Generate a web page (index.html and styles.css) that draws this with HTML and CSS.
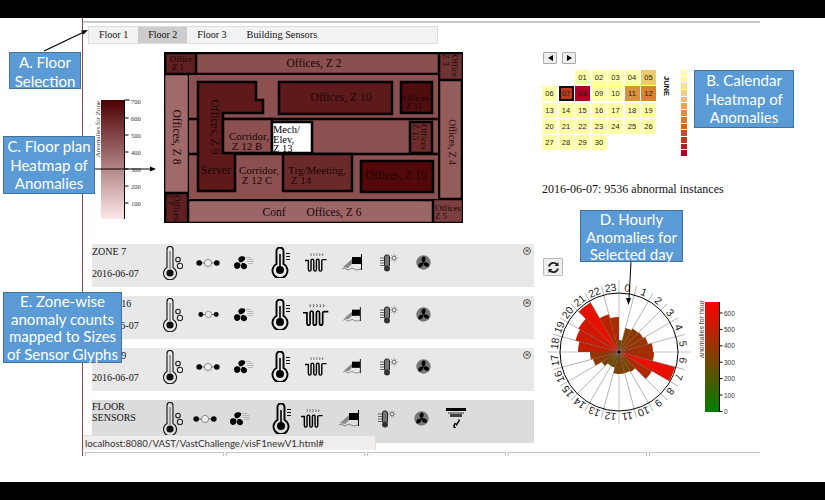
FILE: index.html
```html
<!DOCTYPE html>
<html lang="en">
<head>
<meta charset="UTF-8">
<title>VAST Challenge Floor Anomalies</title>
<link rel="stylesheet" href="styles.css">
</head>
<body>

<svg class="defs" width="0" height="0">
  <symbol id="g-therm-drops" viewBox="0 0 20 34">
    <path d="M4 3.500a3 3 0 0 1 6 0v18a6.500 6.500 0 1 1-6 0z" fill="none" stroke="#111" stroke-width="1.100"/>
    <path d="M7 5v18" stroke="#999" stroke-width="1.800"/>
    <circle cx="7" cy="27" r="3.600" fill="#111"/>
    <circle cx="15" cy="13.500" r="2.300" fill="none" stroke="#222" stroke-width="1.100"/>
    <circle cx="17" cy="20" r="2.700" fill="none" stroke="#222" stroke-width="1.100"/>
  </symbol>
  <symbol id="g-dots" viewBox="0 0 24 10">
    <path d="M3 5h18" stroke="#666" stroke-width="1"/>
    <circle cx="3.200" cy="5" r="2.800" fill="#000"/>
    <circle cx="12" cy="5" r="3.600" fill="#eee" stroke="#888"/>
    <circle cx="20.800" cy="5" r="2.800" fill="#000"/>
  </symbol>
  <symbol id="g-fan-lines" viewBox="0 0 20 14">
    <path d="M6 6.500C3 4 4 .5 8 .2c3-.5 4 1.800 2.500 3.800C9.500 5.500 8 6.500 6 6.500zM6 7.500C3 5.200 0 6.500 0 9.500c0 3 3 4.500 5 2.800C6.500 11 7 9.500 6 7.500zM8 7c3-.5 5 1 5 3.500 0 2.500-3 3.500-5 2C6.500 11.500 6.500 9 8 7z" fill="#000"/>
    <path d="M12 1.500h5M13 3.500h6M13 5.500h7M14 7.500h5" stroke="#aaa" stroke-width=".8"/>
  </symbol>
  <symbol id="g-therm-bars" viewBox="0 0 20 31">
    <path d="M5.500 4a3.500 3.500 0 0 1 7 0v13a7.500 7.500 0 1 1-7 0z" fill="none" stroke="#000" stroke-width="1.900"/>
    <path d="M9 7v16" stroke="#000" stroke-width="1.600"/>
    <circle cx="9" cy="23" r="4" fill="#000"/>
    <path d="M15 6.500h4M15 9.500h4M15 12.500h4" stroke="#111" stroke-width="1.200"/>
  </symbol>
  <symbol id="g-heater" viewBox="0 0 24 21">
    <path d="M0 8.500h3.500v9q0 2 1.400 2t1.400-2v-9q0-1.500 1.400-1.500t1.400 1.500v9q0 2 1.400 2t1.400-2v-9q0-1.500 1.400-1.500t1.400 1.500v9q0 2 1.400 2t1.400-2v-9q0-1 1.500-1h3.500" fill="none" stroke="#000" stroke-width="1.500"/>
    <path d="M6 1l.8 1.200L6 3.500M9 1l.8 1.200L9 3.500M12 1l.8 1.200-.8 1.300M15 1l.8 1.200-.8 1.300M18 1l.8 1.200-.8 1.300" fill="none" stroke="#333" stroke-width=".8"/>
  </symbol>
  <symbol id="g-level" viewBox="0 0 20 17">
    <path d="M19.500 0v16" stroke="#000"/>
    <rect x="10" y="3" width="9" height="7" fill="#000"/>
    <path d="M1 13l9-8v5l-4 4z" fill="#888"/>
    <path d="M0 15q2-2 4 0t4 0 4 0 7 0" fill="none" stroke="#777" stroke-width=".9"/>
  </symbol>
  <symbol id="g-therm-sun" viewBox="0 0 19 18">
    <rect x="5.500" y="1" width="5" height="12" rx="2" fill="#777" stroke="#222"/>
    <path d="M1 4h4M1 6.500h4M1 9h4M1 11.500h4" stroke="#555" stroke-width=".9"/>
    <circle cx="8" cy="14.500" r="3" fill="#333"/>
    <circle cx="15" cy="4" r="2" fill="none" stroke="#666"/>
    <path d="M15 .2v1M15 6.800v1M11.200 4h1M17.800 4h1M12.300 1.300l.7.7M17 6l.7.7M12.300 6.700l.7-.7M17 2l.7-.7" stroke="#777" stroke-width=".7"/>
  </symbol>
  <symbol id="g-fan" viewBox="0 0 16 16">
    <circle cx="8" cy="8" r="7.700" fill="#777"/>
    <path d="M8 8C5 6 5.500 2 8.500 1.500 11 2 11 6 8 8zM8 8c3.500-1 6 1 6 3.500-1.500 2-5.500 1.500-6-3.500zM8 8c0 3.500-2.500 6-5 5-1.500-2 .5-5.500 5-5z" fill="#000"/>
  </symbol>
  <symbol id="g-alarm" viewBox="0 0 20 22">
    <rect x="0" y="0" width="20" height="3" fill="#000"/>
    <rect x="2" y="4" width="16" height="2" fill="#888"/>
    <rect x="4" y="6" width="12" height="3" fill="#444"/>
    <path d="M12.500 11.500q1.500 1-.5 3t-1 3M9.500 15q-1.500 2-1.500 3.500t1.500.5" fill="none" stroke="#000" stroke-width="1.500"/>
  </symbol>
  <linearGradient id="zone-grad" x1="0" y1="0" x2="0" y2="1">
    <stop offset="0" stop-color="#4d0000"/>
    <stop offset="1" stop-color="#fde8ea"/>
  </linearGradient>
  <linearGradient id="hour-grad" x1="0" y1="0" x2="0" y2="1">
    <stop offset="0" stop-color="#ff0000"/>
    <stop offset="1" stop-color="#008000"/>
  </linearGradient>
</svg>

<div class="page">
  <div class="bar"></div>

  <div class="shot">
    <div class="left">
      <div class="tabs">
        <a class="tab">Floor 1</a>
        <a class="tab active">Floor 2</a>
        <a class="tab">Floor 3</a>
        <a class="tab">Building Sensors</a>
      </div>

      <div class="floor">
        <svg class="zone-legend" width="60" height="130" viewBox="0 0 60 130">
          <text class="axis-title" transform="translate(9,37) rotate(-90)">Anomalies for Zone</text>
          <rect x="10" y="8" width="23" height="119" fill="url(#zone-grad)"/>
          <path d="M33.500 8v119M33.500 8h5M33.500 26h4M33.500 43h4M33.500 60h4M33.500 77h4M33.500 94h4M33.500 111h4" stroke="#000" fill="none"/>
          <text class="tick" x="40" y="12">700</text>
          <text class="tick" x="40" y="29">600</text>
          <text class="tick" x="40" y="46">500</text>
          <text class="tick" x="40" y="63">400</text>
          <text class="tick" x="40" y="80">300</text>
          <text class="tick" x="40" y="97">200</text>
          <text class="tick" x="40" y="114">100</text>
        </svg>

        <svg class="plan" width="300" height="172" viewBox="164 52 300 172">
          <rect x="164" y="52" width="299" height="171" fill="#000"/>
          <rect x="189" y="75" width="249" height="124" fill="#8c5050"/>
          <rect class="room" x="166" y="54" width="29" height="19" fill="#5e2020"/>
          <rect class="room" x="197" y="54" width="241" height="19" fill="#8a4f4f"/>
          <rect class="room" x="440" y="54" width="22" height="25" fill="#6e3333"/>
          <rect class="room" x="165" y="75" width="23" height="117" fill="#a06a6a"/>
          <rect class="room" x="440" y="81" width="21" height="117" fill="#955c5c"/>
          <rect class="room" x="166" y="194" width="21" height="28" fill="#5e2020"/>
          <rect class="room" x="189" y="201" width="243" height="21" fill="#9c6666"/>
          <rect class="room" x="434" y="200" width="28" height="22" fill="#7c4040"/>
          <path class="wall" d="M189 119H438M189 154H438" fill="none"/>
          <path class="wall" d="M198 82H256V100H263V113H223V153H235V191H198Z" fill="#5e1a1a"/>
          <rect class="wall" x="279" y="82" width="113" height="32" fill="#5e1a1a"/>
          <rect class="wall" x="401" y="82" width="31" height="31" fill="#4f0d0d"/>
          <rect class="wall" x="223" y="119" width="49" height="34" fill="#8c5050"/>
          <rect class="wall" x="272" y="122" width="40" height="31" fill="#fff"/>
          <rect class="wall" x="410" y="122" width="22" height="31" fill="#6e2c2c"/>
          <rect class="wall" x="283" y="154" width="69" height="37" fill="#6b2a2a"/>
          <rect class="wall" x="361" y="161" width="72" height="31" fill="#520808"/>

          <text class="lbl sm" x="181" y="62">Office</text>
          <text class="lbl sm" x="178" y="69.500">Z 1</text>
          <text class="lbl" x="314" y="67">Offices, Z 2</text>
          <text class="lbl sm" transform="translate(452,66) rotate(90)">Office</text>
          <text class="lbl sm" transform="translate(443,60) rotate(90)">Z 3</text>
          <text class="lbl" transform="translate(173,137) rotate(90)">Offices, Z 8</text>
          <text class="lbl md" transform="translate(449,142) rotate(90)">Offices, Z 4</text>
          <text class="lbl sm" transform="translate(174,208) rotate(90)">Offices</text>
          <text class="lbl sm" transform="translate(167,199) rotate(90)">Z 7</text>
          <text class="lbl" x="274" y="216">Conf</text>
          <text class="lbl" x="334" y="216">Offices, Z 6</text>
          <text class="lbl sm" x="448" y="211">Offices</text>
          <text class="lbl sm" x="441" y="219">Z 5</text>
          <text class="lbl" transform="translate(211,127) rotate(90)">Offices, Z 9</text>
          <text class="lbl" x="216" y="174">Server</text>
          <text class="lbl" x="341" y="101">Offices, Z 10</text>
          <text class="lbl sm" x="416" y="101">Offices</text>
          <text class="lbl sm" x="414" y="109">Z 11</text>
          <text class="lbl nar" x="249" y="140">Corridor,</text>
          <text class="lbl nar" x="247" y="150">Z 12 B</text>
          <text class="lbl nar" x="259" y="174">Corridor,</text>
          <text class="lbl nar" x="257" y="184">Z 12 C</text>
          <text class="lbl left-lbl" x="273" y="133">Mech/</text>
          <text class="lbl left-lbl" x="273" y="143">Elev,</text>
          <text class="lbl left-lbl" x="273" y="152">Z 13</text>
          <text class="lbl sm" transform="translate(421,137) rotate(90)">Offices</text>
          <text class="lbl sm" transform="translate(413,132) rotate(90)">Z 15</text>
          <text class="lbl nar" x="317" y="174">Trg/Meeting,</text>
          <text class="lbl nar" x="301" y="184">Z 14</text>
          <text class="lbl" x="396" y="179">Offices, Z 16</text>
        </svg>
      </div>

      <div class="rows">
        <div class="zone-row">
          <div class="zone-label"><span>ZONE 7</span><span>2016-06-07</span></div>
          <svg class="g-tall"><use href="#g-therm-drops"/></svg>
          <svg class="g-dots"><use href="#g-dots"/></svg>
          <svg class="g-fanl"><use href="#g-fan-lines"/></svg>
          <svg class="g-bars"><use href="#g-therm-bars"/></svg>
          <svg class="g-heat"><use href="#g-heater"/></svg>
          <svg class="g-level"><use href="#g-level"/></svg>
          <svg class="g-sun"><use href="#g-therm-sun"/></svg>
          <svg class="g-fan"><use href="#g-fan"/></svg>
          <span class="close">&times;</span>
        </div>
        <div class="zone-row">
          <div class="zone-label"><span>ZONE 16</span><span>2016-06-07</span></div>
          <svg class="g-tall"><use href="#g-therm-drops"/></svg>
          <svg class="g-dots small"><use href="#g-dots"/></svg>
          <svg class="g-fanl"><use href="#g-fan-lines"/></svg>
          <svg class="g-bars"><use href="#g-therm-bars"/></svg>
          <svg class="g-heat big"><use href="#g-heater"/></svg>
          <svg class="g-level small"><use href="#g-level"/></svg>
          <svg class="g-sun"><use href="#g-therm-sun"/></svg>
          <svg class="g-fan"><use href="#g-fan"/></svg>
          <span class="close">&times;</span>
        </div>
        <div class="zone-row">
          <div class="zone-label"><span>ZONE 9</span><span>2016-06-07</span></div>
          <svg class="g-tall"><use href="#g-therm-drops"/></svg>
          <svg class="g-dots"><use href="#g-dots"/></svg>
          <svg class="g-fanl"><use href="#g-fan-lines"/></svg>
          <svg class="g-bars"><use href="#g-therm-bars"/></svg>
          <svg class="g-heat"><use href="#g-heater"/></svg>
          <svg class="g-level small"><use href="#g-level"/></svg>
          <svg class="g-sun"><use href="#g-therm-sun"/></svg>
          <svg class="g-fan"><use href="#g-fan"/></svg>
          <span class="close">&times;</span>
        </div>
        <div class="zone-row floor-row">
          <div class="zone-label two-line"><span>FLOOR</span><span>SENSORS</span></div>
          <svg class="g-tall"><use href="#g-therm-drops"/></svg>
          <svg class="g-dots"><use href="#g-dots"/></svg>
          <svg class="g-fanl"><use href="#g-fan-lines"/></svg>
          <svg class="g-bars"><use href="#g-therm-bars"/></svg>
          <svg class="g-heat"><use href="#g-heater"/></svg>
          <svg class="g-level"><use href="#g-level"/></svg>
          <svg class="g-sun"><use href="#g-therm-sun"/></svg>
          <svg class="g-fan"><use href="#g-fan"/></svg>
          <svg class="g-alarm"><use href="#g-alarm"/></svg>
        </div>
      </div>
    </div>

    <div class="right">
      <div class="cal-nav">
        <button class="nav-btn"><span class="tri-left"></span></button>
        <button class="nav-btn"><span class="tri-right"></span></button>
      </div>

      <div class="cal-wrap">
        <div class="cal">
          <i></i><i></i>
          <b>01</b><b>02</b><b>03</b><b>04</b><b class="c-05">05</b>
          <b>06</b><b class="c-07">07</b><b class="c-08">08</b><b>09</b><b>10</b><b class="c-11">11</b><b class="c-12">12</b>
          <b>13</b><b>14</b><b>15</b><b>16</b><b>17</b><b>18</b><b>19</b>
          <b>20</b><b>21</b><b>22</b><b>23</b><b>24</b><b>25</b><b>26</b>
          <b>27</b><b>28</b><b>29</b><b>30</b>
        </div>
        <div class="month">JUNE</div>
        <div class="cal-scale">
          <i class="s1"></i><i class="s2"></i><i class="s3"></i><i class="s4"></i><i class="s5"></i><i class="s6"></i><i class="s7"></i><i class="s8"></i><i class="s9"></i><i class="s10"></i><i class="s11"></i><i class="s12"></i><i class="s13"></i>
        </div>
      </div>

      <p class="day-note">2016-06-07: 9536 abnormal instances</p>

      <button class="reload">
        <svg width="13" height="13" viewBox="0 0 13 13"><path d="M2 5.500A4.700 4.700 0 0 1 10.500 4M11 7.500A4.700 4.700 0 0 1 2.500 9" fill="none" stroke="#222" stroke-width="1.800"/><path d="M11.500 1v4h-4zM1.500 12V8h4z" fill="#222"/></svg>
      </button>

      <svg id="rose" class="rose" width="205" height="150" viewBox="0 0 205 150"></svg>
    </div>

    <div class="status">localhost:8080/VAST/VastChallenge/visF1newV1.html#</div>
    <div class="downloads"><i></i><i></i><i></i><i></i><i></i></div>
  </div>

  <div class="bar bottom"></div>

  <svg class="notes" width="825" height="500" viewBox="0 0 825 500">
    <path d="M44 51L84 32" stroke="#000" stroke-width="1.300"/>
    <path d="M88 30l-7 .5 2.500 4z"/>
    <path d="M87 169H150" stroke="#000" stroke-width="1"/>
    <path d="M156 169l-6-2.500v5z"/>
    <path d="M631 262L629 299" stroke="#000" stroke-width="1"/>
    <path d="M628.500 305l-2.500-7h5z"/>
  </svg>
  <div class="callout call-a">A. Floor<br>Selection</div>
  <div class="callout call-b">B. Calendar<br>Heatmap of<br>Anomalies</div>
  <div class="callout call-c">C. Floor plan<br>Heatmap of<br>Anomalies</div>
  <div class="callout call-d">D. Hourly<br>Anomalies for<br>Selected day</div>
  <div class="callout call-e">E. Zone-wise<br>anomaly counts<br>mapped to Sizes<br>of Sensor Glyphs</div>
</div>

<script src="chart.js"></script>
</body>
</html>
```

FILE: styles.css
```css
body{margin:0;background:#fff;font-family:"Liberation Serif",serif;color:#111;}
.defs{position:absolute;}
.page{position:relative;width:825px;height:500px;overflow:hidden;display:flex;flex-direction:column;}
.bar{height:18px;background:#000;flex:none;}
.bar.bottom{margin-top:auto;}

.shot{position:relative;height:438px;width:678px;margin-left:82px;border-left:1px solid #8a4a4a;display:flex;box-sizing:border-box;overflow:hidden;}
.shot::before{content:"";position:absolute;left:0;right:0;top:3px;height:2px;background:#c8c8c8;}
.left{width:459px;flex:none;padding:8px 0 0 5px;box-sizing:border-box;}
.right{flex:1;padding:34px 0 0 0;}

.tabs{display:flex;width:350px;height:18px;box-sizing:border-box;background:#f2f2f2;border:1px solid #ddd;font-size:10px;line-height:16px;}
.tab{padding:0 10px;}
.tab.active{background:#ccc;}
.tab:last-child{font-size:10.300px;}

.floor{display:flex;margin-top:8px;height:172px;}
.zone-legend{margin:40px 0 0 3px;flex:none;}
.plan{margin-left:13px;flex:none;}
.room,.wall{stroke:#000;}
.room{stroke-width:.5;}
.wall{stroke-width:2.500;}
.lbl{font-size:11.500px;text-anchor:middle;fill:#1a0606;}
.lbl.nar{font-size:11px;}
.lbl.md{font-size:9.500px;}
.lbl.sm{font-size:8.800px;}
.lbl.left-lbl{text-anchor:start;font-size:10.500px;fill:#000;}
.axis-title{font-size:7px;text-anchor:middle;fill:#333;}
.tick{font-size:6.500px;fill:#333;}

.rows{margin:20px 0 0 4px;width:442px;display:flex;flex-direction:column;gap:9px;}
.zone-row{position:relative;flex:none;height:43px;background:#e8e8e8;display:grid;grid-template-columns:63px 36px 34px 37px 37px 34px 38px 35px 35px 29px;align-items:center;justify-items:center;}
.zone-row svg{margin-bottom:6px;}
.floor-row{background:#dcdcdc;grid-template-columns:63px 36px 28px 42px 42px 18px 56px 18px 52px 18px;}
.zone-label{justify-self:start;align-self:stretch;display:flex;flex-direction:column;justify-content:space-between;padding:2px 0 8px;font-size:10px;line-height:11px;box-sizing:border-box;}
.two-line{justify-content:flex-start;padding-top:1px;}
.close{position:absolute;right:3px;top:3px;width:6px;height:6px;border:1px solid #555;border-radius:50%;font:8px/6px "Liberation Sans",sans-serif;text-align:center;color:#222;}

.g-tall{width:20px;height:34px;}
.g-dots{width:24px;height:10px;}
.g-dots.small{width:21px;height:9px;}
.g-fanl{width:20px;height:14px;}
.g-bars{width:20px;height:31px;}
.g-heat{width:23px;height:21px;}
.g-heat.big{width:27px;height:24px;}
.g-level{width:20px;height:17px;}
.g-level.small{width:18px;height:15px;}
.g-sun{width:19px;height:18px;}
.g-fan{width:15px;height:15px;}
.g-alarm{width:20px;height:22px;}

.cal-nav{display:flex;gap:5px;margin-left:1px;height:18px;}
.nav-btn{width:14px;height:12px;padding:0;background:#eee;border:1px solid #aaa;border-radius:1px;display:flex;align-items:center;justify-content:center;}
.tri-left{border:3px solid transparent;border-left:0;border-right:5px solid #000;}
.tri-right{border:3px solid transparent;border-right:0;border-left:5px solid #000;}

.cal-wrap{display:flex;height:92px;}
.cal{width:114px;display:grid;grid-template-columns:repeat(7,15px);grid-auto-rows:15px;gap:1.300px 1.500px;align-content:start;}
.cal b{background:#ffffa8;font:7.500px/15px "Liberation Sans",sans-serif;text-align:center;color:#222;}
.cal b.c-05{background:#edcb6a;}
.cal b.c-07{background:#c0391f;outline:2px solid #111;outline-offset:-2px;}
.cal b.c-08{background:#b00026;}
.cal b.c-11{background:#d9933a;}
.cal b.c-12{background:#d8832e;}
.month{writing-mode:vertical-rl;font:bold 7.500px/8px "Liberation Sans",sans-serif;margin:6px 0 0 6px;height:20px;}
.cal-scale{margin-left:11px;width:6px;display:flex;flex-direction:column;gap:1px;}
.cal-scale i{height:5.700px;}
.s1{background:#ffffa8;}
.s2{background:#fff59a;}
.s3{background:#f7e28a;}
.s4{background:#f0d070;}
.s5{background:#ecbc5e;}
.s6{background:#e5a548;}
.s7{background:#de903a;}
.s8{background:#d67a2e;}
.s9{background:#cc6524;}
.s10{background:#c44f20;}
.s11{background:#bc3820;}
.s12{background:#b01f20;}
.s13{background:#b00026;}

.day-note{margin:20px 0 0 0;font-size:12px;line-height:14px;}
.reload{display:flex;align-items:center;justify-content:center;margin:62px 0 0 1px;width:20px;height:18px;padding:0;background:#eee;border:1px solid #bbb;border-radius:1px;}
.rose{display:block;margin:4px 0 0 5px;}
.rose text{font-family:"Liberation Sans",sans-serif;}
.hour{font-size:10.500px;text-anchor:middle;fill:#222;}

.status{position:absolute;left:0;top:417px;width:293px;height:15px;box-sizing:border-box;padding-left:2px;background:#f0eeec;border:1px solid #ddd;border-width:1px 1px 0 0;border-radius:0 3px 0 0;font:9.700px/15px "Lato",sans-serif;color:#333;}
.downloads{position:absolute;left:0;right:0;bottom:0;height:4px;padding-left:2px;display:flex;gap:2px;background:#f3f3f3;}
.downloads i{flex:none;width:139px;border:1px solid #c4c4c4;border-bottom:0;box-sizing:border-box;background:#fafafa;}

.notes{position:absolute;left:0;top:0;pointer-events:none;}
.callout{position:absolute;box-sizing:border-box;background:#5b9bd5;border:1px solid #41719c;color:#fff;font:15px/18.500px "Lato",sans-serif;text-align:center;}
.call-a{left:9px;top:52px;width:72px;height:37px;}
.call-b{left:694px;top:70px;width:100px;height:58px;}
.call-c{left:3px;top:136px;width:92px;height:58px;}
.call-d{left:580px;top:210px;width:103px;height:52px;line-height:17.500px;}
.call-e{left:3px;top:292px;width:119px;height:71px;line-height:17.500px;}
```

FILE: chart.js
```js
// Hourly anomaly rose, one wedge per hour
const hourRadius = [12, 25, 27, 28, 30, 34, 35, 58, 38, 23, 22, 22, 22, 16, 16, 20, 27, 29, 41, 45, 47, 57, 39, 35];
const svg = document.getElementById('rose');
const cx = 72, cy = 72, ring = 59;
let out = '';

function pt(r, deg) {
  const a = (deg - 90) * Math.PI / 180;
  return (cx + r * Math.cos(a)).toFixed(1) + ' ' + (cy + r * Math.sin(a)).toFixed(1);
}

function hourColor(r) {
  if (r > 50) return '#e81000';
  const t = 0.2 + 0.6 * r / 45;
  return 'rgb(' + Math.round(255 * t) + ',' + Math.round(128 * (1 - t)) + ',0)';
}

hourRadius.forEach((r, i) => {
  const a = i * 15;
  out += `<path d="M${cx} ${cy}L${pt(r, a)}A${r} ${r} 0 0 1 ${pt(r, a + 15)}Z" fill="${hourColor(r)}"/>`;
});

for (let i = 0; i < 24; i++) {
  const a = i * 15;
  const long = i % 6 === 0;
  out += `<path d="M${cx} ${cy}L${pt(long ? 72 : 68, a)}" stroke="#555" stroke-opacity="${long ? 0.45 : 0.55}" stroke-width="0.8"/>`;
  out += `<text class="hour" transform="rotate(${a + 7.5} ${cx} ${cy})" x="${cx}" y="${cy - ring - 2}">${i}</text>`;
}

out += `<circle cx="${cx}" cy="${cy}" r="${ring}" fill="none" stroke="#000" stroke-width="1"/>`;
out += `<circle cx="${cx}" cy="${cy}" r="1.500" fill="#000"/>`;

// colour legend on the right
const legendX = 158, legendTop = 22;
out += `<rect x="${legendX}" y="${legendTop}" width="14" height="110" fill="url(#hour-grad)"/>`;
out += `<path d="M${legendX + 14.5} ${legendTop}v110" stroke="#000" fill="none"/>`;
[600, 500, 400, 300, 200, 100, 0].forEach((v, i) => {
  const y = legendTop + 11 + i * 16.4;
  out += `<path d="M${legendX + 14.5} ${y}h3" stroke="#000"/>`;
  out += `<text class="tick" x="${legendX + 19}" y="${y + 2.5}">${v}</text>`;
});
out += `<text class="axis-title" transform="translate(${legendX - 1},${legendTop + 27}) rotate(-90)">anomalies for hour</text>`;

svg.innerHTML = out;
```
